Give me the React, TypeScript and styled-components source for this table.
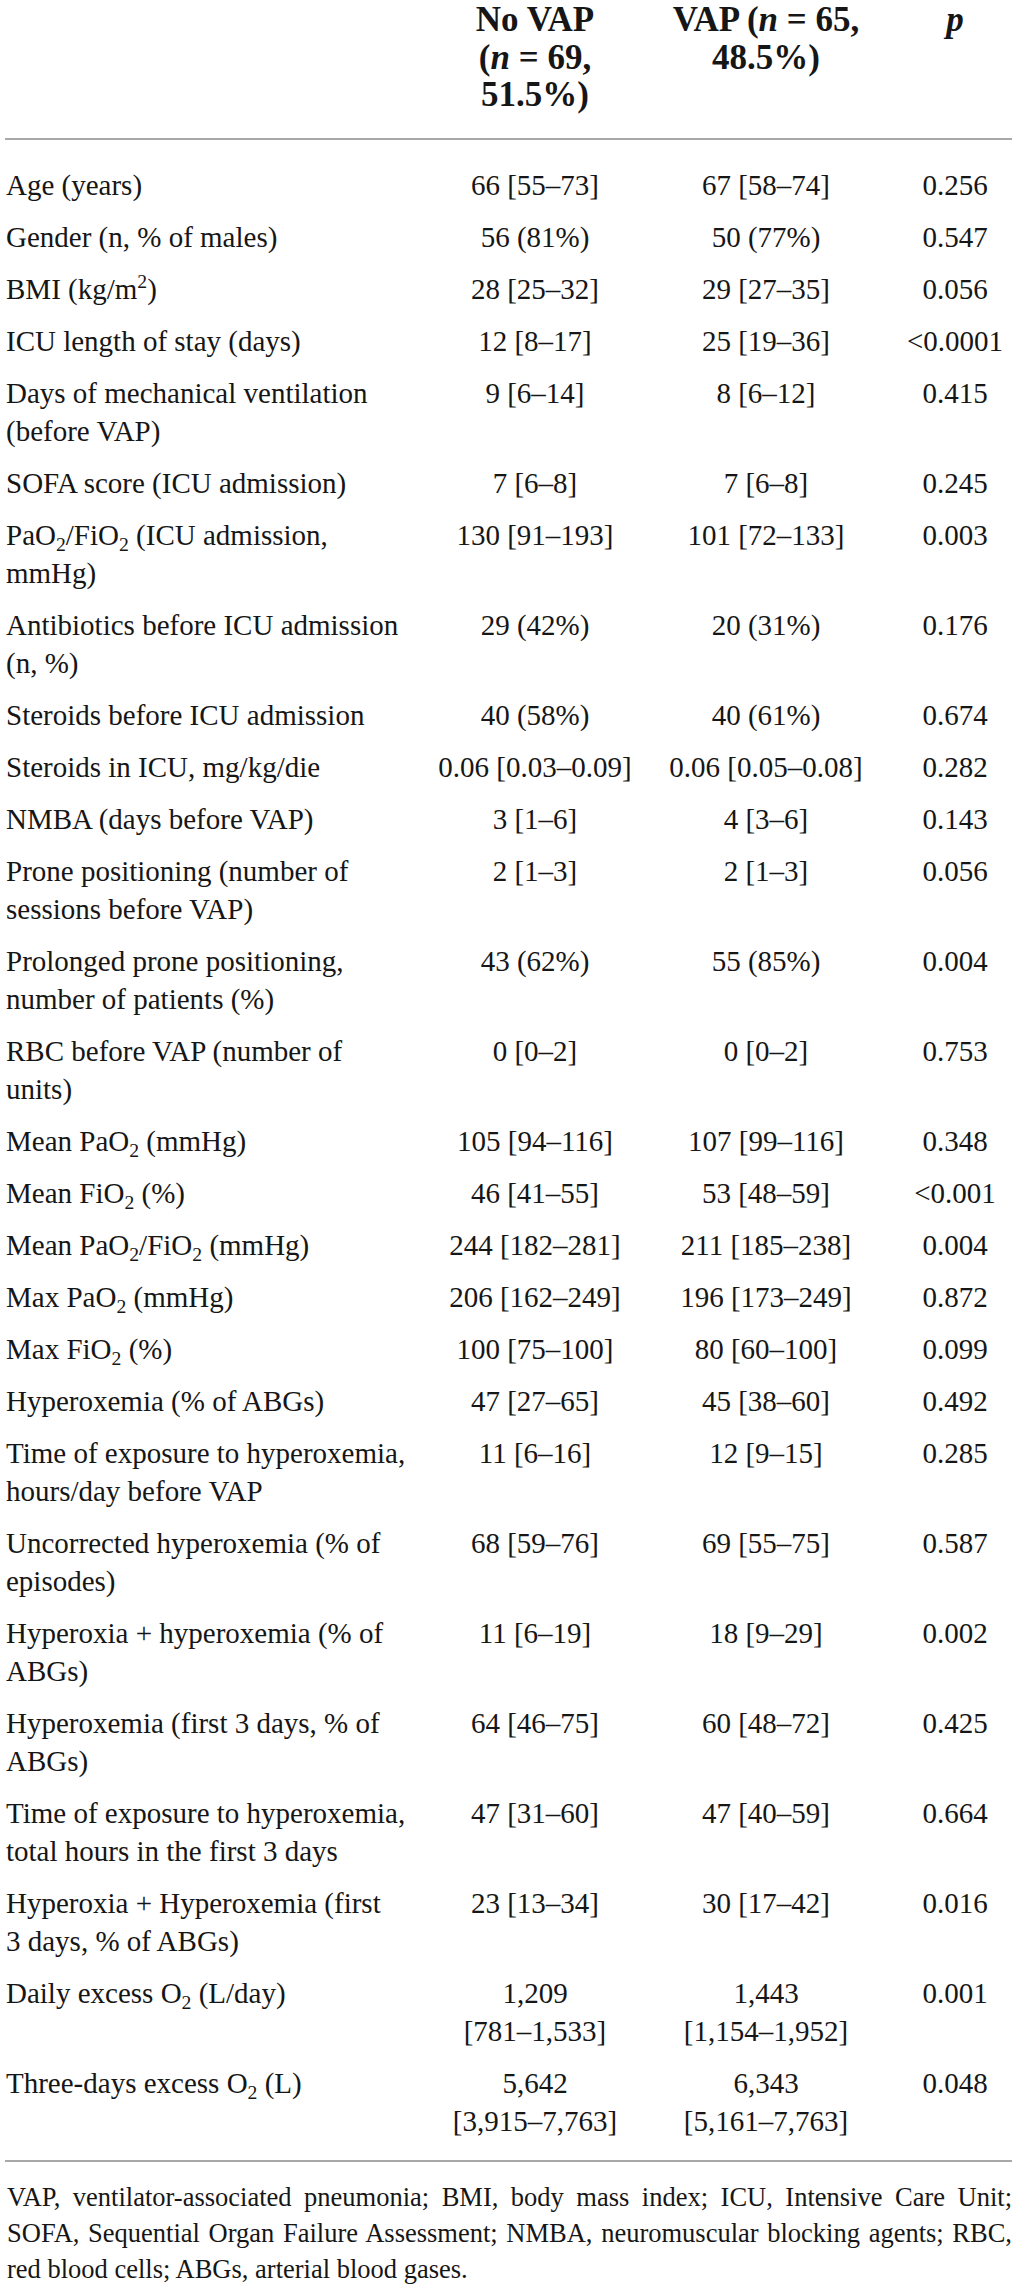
import React from 'react';
import styled, { createGlobalStyle } from 'styled-components';

const GlobalStyle = createGlobalStyle`
  html, body {
    margin: 0;
    padding: 0;
    background: #ffffff;
  }
  body {
    font-family: "Liberation Serif", "Times New Roman", serif;
    color: #161616;
  }
`;

const COLS = '415px 230px 232px 130px';

const Page = styled.div`
  width: 1007px;
  margin-left: 5px;
  padding-top: 1px;
`;

const HeaderRow = styled.div`
  display: grid;
  grid-template-columns: ${COLS};
  padding-bottom: 24px;
  border-bottom: 2px solid #a8a8a8;
  font-weight: bold;
  font-size: 35px;
  line-height: 37.5px;
`;

const HeadCell = styled.div<{ $shift?: number }>`
  text-align: center;
  white-space: nowrap;
  padding-left: ${(p) => p.$shift ?? 0}px;
`;

const Body = styled.div`
  padding: 19px 0 13px;
  border-bottom: 2px solid #a8a8a8;
`;

const Row = styled.div`
  display: grid;
  grid-template-columns: ${COLS};
  padding: 7px 0;
  font-size: 29px;
  line-height: 38px;
`;

const Label = styled.div`
  padding-left: 1px;
  white-space: nowrap;
`;

const Value = styled.div<{ $shift?: number }>`
  text-align: center;
  white-space: nowrap;
  padding-left: ${(p) => p.$shift ?? 0}px;
`;

const Line = styled.div``;

const Sub = styled.sub`
  font-size: 0.68em;
  vertical-align: -0.32em;
  line-height: 0;
`;

const Sup = styled.sup`
  font-size: 0.68em;
  vertical-align: 0.55em;
  line-height: 0;
`;

const Footnote = styled.p`
  margin: 0;
  padding: 17px 0 0 2px;
  font-size: 26.5px;
  line-height: 36px;
  text-align: justify;
`;

const O2 = () => (
  <>
    O<Sub>2</Sub>
  </>
);

type RowData = {
  label: React.ReactNode[];
  a: React.ReactNode[];
  b: React.ReactNode[];
  p: string;
};

const rows: RowData[] = [
  { label: ['Age (years)'], a: ['66 [55–73]'], b: ['67 [58–74]'], p: '0.256' },
  { label: ['Gender (n, % of males)'], a: ['56 (81%)'], b: ['50 (77%)'], p: '0.547' },
  {
    label: [
      <>
        BMI (kg/m<Sup>2</Sup>)
      </>,
    ],
    a: ['28 [25–32]'],
    b: ['29 [27–35]'],
    p: '0.056',
  },
  { label: ['ICU length of stay (days)'], a: ['12 [8–17]'], b: ['25 [19–36]'], p: '<0.0001' },
  {
    label: ['Days of mechanical ventilation', '(before VAP)'],
    a: ['9 [6–14]'],
    b: ['8 [6–12]'],
    p: '0.415',
  },
  { label: ['SOFA score (ICU admission)'], a: ['7 [6–8]'], b: ['7 [6–8]'], p: '0.245' },
  {
    label: [
      <>
        PaO<Sub>2</Sub>/FiO<Sub>2</Sub> (ICU admission,
      </>,
      'mmHg)',
    ],
    a: ['130 [91–193]'],
    b: ['101 [72–133]'],
    p: '0.003',
  },
  {
    label: ['Antibiotics before ICU admission', '(n, %)'],
    a: ['29 (42%)'],
    b: ['20 (31%)'],
    p: '0.176',
  },
  { label: ['Steroids before ICU admission'], a: ['40 (58%)'], b: ['40 (61%)'], p: '0.674' },
  {
    label: ['Steroids in ICU, mg/kg/die'],
    a: ['0.06 [0.03–0.09]'],
    b: ['0.06 [0.05–0.08]'],
    p: '0.282',
  },
  { label: ['NMBA (days before VAP)'], a: ['3 [1–6]'], b: ['4 [3–6]'], p: '0.143' },
  {
    label: ['Prone positioning (number of', 'sessions before VAP)'],
    a: ['2 [1–3]'],
    b: ['2 [1–3]'],
    p: '0.056',
  },
  {
    label: ['Prolonged prone positioning,', 'number of patients (%)'],
    a: ['43 (62%)'],
    b: ['55 (85%)'],
    p: '0.004',
  },
  {
    label: ['RBC before VAP (number of', 'units)'],
    a: ['0 [0–2]'],
    b: ['0 [0–2]'],
    p: '0.753',
  },
  {
    label: [
      <>
        Mean Pa<O2 /> (mmHg)
      </>,
    ],
    a: ['105 [94–116]'],
    b: ['107 [99–116]'],
    p: '0.348',
  },
  {
    label: [
      <>
        Mean Fi<O2 /> (%)
      </>,
    ],
    a: ['46 [41–55]'],
    b: ['53 [48–59]'],
    p: '<0.001',
  },
  {
    label: [
      <>
        Mean Pa<O2 />/Fi<O2 /> (mmHg)
      </>,
    ],
    a: ['244 [182–281]'],
    b: ['211 [185–238]'],
    p: '0.004',
  },
  {
    label: [
      <>
        Max Pa<O2 /> (mmHg)
      </>,
    ],
    a: ['206 [162–249]'],
    b: ['196 [173–249]'],
    p: '0.872',
  },
  {
    label: [
      <>
        Max Fi<O2 /> (%)
      </>,
    ],
    a: ['100 [75–100]'],
    b: ['80 [60–100]'],
    p: '0.099',
  },
  { label: ['Hyperoxemia (% of ABGs)'], a: ['47 [27–65]'], b: ['45 [38–60]'], p: '0.492' },
  {
    label: ['Time of exposure to hyperoxemia,', 'hours/day before VAP'],
    a: ['11 [6–16]'],
    b: ['12 [9–15]'],
    p: '0.285',
  },
  {
    label: ['Uncorrected hyperoxemia (% of', 'episodes)'],
    a: ['68 [59–76]'],
    b: ['69 [55–75]'],
    p: '0.587',
  },
  {
    label: ['Hyperoxia + hyperoxemia (% of', 'ABGs)'],
    a: ['11 [6–19]'],
    b: ['18 [9–29]'],
    p: '0.002',
  },
  {
    label: ['Hyperoxemia (first 3 days, % of', 'ABGs)'],
    a: ['64 [46–75]'],
    b: ['60 [48–72]'],
    p: '0.425',
  },
  {
    label: ['Time of exposure to hyperoxemia,', 'total hours in the first 3 days'],
    a: ['47 [31–60]'],
    b: ['47 [40–59]'],
    p: '0.664',
  },
  {
    label: ['Hyperoxia + Hyperoxemia (first', '3 days, % of ABGs)'],
    a: ['23 [13–34]'],
    b: ['30 [17–42]'],
    p: '0.016',
  },
  {
    label: [
      <>
        Daily excess <O2 /> (L/day)
      </>,
    ],
    a: ['1,209', '[781–1,533]'],
    b: ['1,443', '[1,154–1,952]'],
    p: '0.001',
  },
  {
    label: [
      <>
        Three-days excess <O2 /> (L)
      </>,
    ],
    a: ['5,642', '[3,915–7,763]'],
    b: ['6,343', '[5,161–7,763]'],
    p: '0.048',
  },
];

const Lines = ({ items }: { items: React.ReactNode[] }) => (
  <>
    {items.map((it, i) => (
      <Line key={i}>{it}</Line>
    ))}
  </>
);

export default function App() {
  return (
    <>
      <GlobalStyle />
      <Page>
        <HeaderRow>
          <HeadCell />
          <HeadCell>
            <Line>No VAP</Line>
            <Line>
              (<i>n</i> = 69,
            </Line>
            <Line>51.5%)</Line>
          </HeadCell>
          <HeadCell>
            <Line>
              VAP (<i>n</i> = 65,
            </Line>
            <Line>48.5%)</Line>
          </HeadCell>
          <HeadCell $shift={16}>
            <i>p</i>
          </HeadCell>
        </HeaderRow>
        <Body>
          {rows.map((r, i) => (
            <Row key={i}>
              <Label>
                <Lines items={r.label} />
              </Label>
              <Value>
                <Lines items={r.a} />
              </Value>
              <Value>
                <Lines items={r.b} />
              </Value>
              <Value $shift={16}>{r.p}</Value>
            </Row>
          ))}
        </Body>
        <Footnote>
          VAP, ventilator-associated pneumonia; BMI, body mass index; ICU, Intensive Care Unit;
          SOFA, Sequential Organ Failure Assessment; NMBA, neuromuscular blocking agents; RBC,
          red blood cells; ABGs, arterial blood gases.
        </Footnote>
      </Page>
    </>
  );
}
